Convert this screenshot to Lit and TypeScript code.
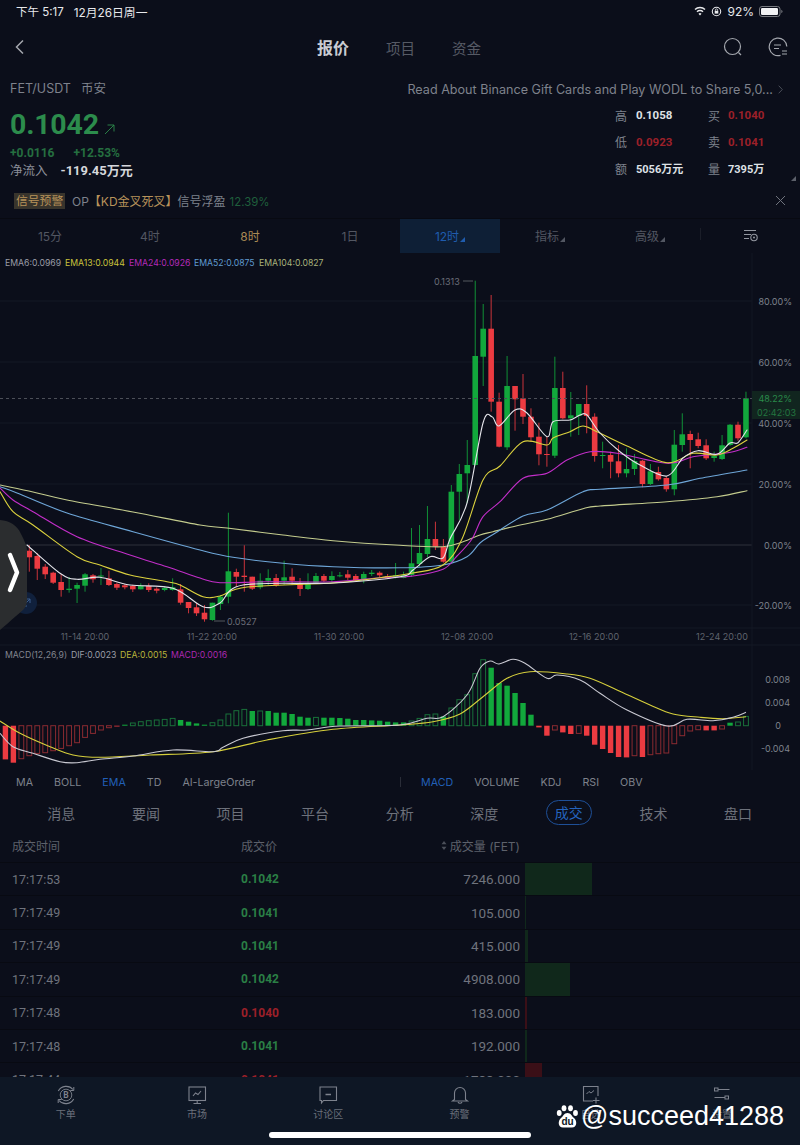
import { LitElement, html, css, svg } from "lit";
import { customElement } from "lit/decorators.js";

type C = [number, number, number, number, "r" | "g"];
const CANDLES: C[] = [
  [545,550.7,557.3,571.7,"r"],[553,556,568.7,580,"r"],[564,566.7,574.3,579,"r"],[571.7,572.7,582.7,584,"r"],[574,582,590,596.7,"r"],
  [577,588.7,590,592.7,"g"],[582.7,585,588.7,603,"g"],[573,574.3,585.7,591.7,"g"],[574,575.3,579.3,582.7,"r"],[568,575.5,576.5,585,"g"],
  [570.7,578.3,585,586,"r"],[582.7,584,587.7,590,"r"],[584,585.3,587.3,589.3,"r"],[584.7,586,589.3,592,"r"],[583.3,585.7,589.3,589.5,"g"],
  [583.3,586,590,592,"r"],[587.3,588.7,590.7,593.3,"r"],[586,588,590,591.3,"g"],[578.3,587.3,590,590.7,"g"],[584,589.3,602.7,604.7,"r"],
  [602,602,608,613.3,"r"],[603,607.3,613.3,616,"r"],[605,612.7,619.3,621.7,"r"],[602.7,602.7,620,620.7,"g"],[595,596.7,604,610,"g"],
  [512.7,571.3,596.7,603.3,"g"],[568.7,572,576.7,586.7,"r"],[545.3,575.7,577,591.7,"r"],[576.7,576.7,588.7,590,"r"],[573.3,580.7,587.3,589.3,"g"],
  [569.3,578,580.7,585,"g"],[574,578,585.3,586.7,"r"],[560.7,577.3,580.7,585,"g"],[568.3,576.7,580.7,585,"r"],[578,583.3,589,596,"r"],
  [573.3,583.3,589,590,"g"],[573,576,582.7,584,"g"],[574,576,580.7,582,"r"],[571.3,576,580,582,"g"],[572,575.3,576.3,577.3,"g"],
  [570,574.3,577.7,580,"r"],[574,576,580,581.7,"r"],[571.7,574,579.3,583.3,"g"],[570,572.7,574,576,"g"],[571.3,572.7,575.3,577.3,"r"],
  [574,576,578.3,579,"r"],[563,575.3,578,578.5,"g"],[571.7,575,578,578.3,"g"],[528,563.3,575,576.7,"g"],[525,553,564,566.7,"g"],
  [506,539,554,557.3,"g"],[521.7,539,546.7,550,"r"],[539,546.7,561.7,562.7,"r"],[485,491.7,561.7,563.3,"g"],[464,474,491.7,520,"g"],
  [440,465,473.3,503,"g"],[280.7,356,465,465.5,"g"],[304,328.7,356.7,386,"g"],[295,328.7,401.7,411.7,"r"],[392.7,401.7,446.7,447.3,"r"],
  [356,386,447.3,450,"g"],[386,386,399.3,430.7,"r"],[374,398.3,416.7,424,"r"],[408.3,416.7,437.3,441.7,"r"],[422.7,436.7,454.3,465.3,"r"],
  [436,454,455,466.7,"r"],[356.7,388,455.7,458,"g"],[371.7,388,418.3,419.3,"r"],[392,415.3,418.3,436.7,"g"],[404,404,416,435,"g"],
  [385.3,404,416,433.3,"r"],[413.3,416.7,456,461.7,"r"],[441.7,455,456,468.3,"g"],[451.7,455,461.7,478.3,"r"],[445,461.3,473.3,477.3,"r"],
  [448.3,469,473.3,477.3,"g"],[454,461,469,475,"g"],[460,460.7,484,487.3,"r"],[464,471.3,484,485,"g"],[466.7,472,479.3,480.7,"r"],
  [476,478,489.3,491.7,"r"],[430,444.7,489.3,495.3,"g"],[413.3,434.3,445,451.7,"g"],[430.7,434,440,468.3,"r"],[432.7,439.3,446,448.3,"r"],
  [439.3,445.3,458.3,460,"r"],[451.7,456,458,461.7,"g"],[435,445.3,459,460,"g"],[424,424.7,445,446,"g"],[421.7,424.7,438.3,440.7,"r"],
  [391.7,398.3,437.3,438.3,"g"],
];

type P = [number, number][];
const EMA104: P = [[0,485],[33,492],[67,500],[133,512],[200,525],[227,528],[283,535],[333,540.7],[400,545.3],[443,546.7],[463,541.7],[480,535],[493,531.7],[513,526.7],[547,519.3],[583,508.7],[600,506],[667,501.7],[717,496.7],[747,490.7]];
const EMA52: P = [[0,486.7],[17,493],[67,513],[133,531.7],[200,550],[233,557.3],[283,563.3],[333,566.7],[400,567.8],[443,565],[467,556.7],[480,543],[493,534.5],[523,516],[547,510],[583,491.7],[600,489.3],[667,485],[700,478.3],[747,470]];
const EMA24: P = [[0,488],[13,500],[33,511.7],[77,536.7],[130,555],[167,566.7],[200,578],[220,582.7],[267,581.7],[333,581.7],[380,577.7],[413,576],[443,569.3],[457,556],[472,539],[483,516.7],[500,501.7],[523,478.3],[547,473.3],[567,460],[590,451.7],[617,453.3],[667,463.3],[693,456.7],[717,454],[733,451.7],[747,447.3]];
const EMA13: P = [[0,491.7],[13,511.7],[33,525],[77,556.7],[100,565],[130,575],[167,581.7],[180,585],[203,596.7],[220,596],[247,587],[333,583],[380,577.7],[413,573],[443,565],[462,539],[483,480],[500,466],[523,441.7],[547,445],[553,438],[570,431.7],[583,426],[597,431.7],[627,446],[667,462.7],[693,453.3],[717,455],[733,448.3],[747,440]];
const EMA6: P = [[27,545],[60,573.3],[77,579.3],[100,577.3],[130,585],[173,588.3],[203,606.7],[220,603],[243,585],[333,583],[400,576.7],[413,570],[430,556.7],[443,558],[450,539],[467,503],[483,423],[492,416.7],[499,426],[515,410],[527,413],[547,436.7],[553,421.7],[570,420],[580,415],[587,415],[600,433],[620,451.7],[640,465],[667,476],[683,458],[698,450.7],[717,454.3],[730,443],[738,442.7],[747,430]];
const DIF: P = [[0,733.3],[13,746.7],[33,753.3],[60,761.7],[77,762.7],[100,759.3],[133,756],[173,750],[213,751.7],[223,747.3],[243,738.3],[283,730.7],[307,730],[340,726],[400,725],[427,718.3],[443,716.7],[467,695],[480,668.3],[490,661],[499,664],[513,659.3],[525,663.3],[547,678.3],[557,675],[580,680],[600,693.3],[627,710],[667,726],[687,719.3],[713,720.7],[733,717.3],[746,712.3]];
const DEA: P = [[0,721],[20,733.3],[50,746.7],[73,755],[100,757.3],[150,755],[213,751.7],[267,740],[333,729.3],[400,725],[433,721.7],[460,714],[483,696.7],[507,678.3],[530,671.7],[567,674],[590,678.3],[617,690],[650,705],[673,714],[700,717.3],[723,718.7],[746,716.7]];

// signed height (up is positive) and filled flag, first entry sits at i = -3
const MACD: [number, number][] = [
  [-33.7,1],[-37,1],[-33,0],[-30,0],[-27.7,0],[-27,0],[-25,0],[-22.7,0],[-20,0],[-17,0],[-11.7,0],[-7.7,0],[-4.3,0],[-2,0],[-0.8,1],
  [1,1],[2.7,0],[4,0],[5,0],[5.7,0],[6.3,0],[7.3,0],[5.7,1],[4,1],[2.3,1],[1,1],[3,0],[5.7,0],[11.7,0],[15,0],[16.3,0],
  [14.7,1],[14.7,0],[14.7,1],[13,1],[13,1],[11.7,1],[9,1],[8,1],[8.3,0],[8,1],[8,1],[7.7,1],[7,1],[5.7,1],[5.7,1],[5.3,1],[5,1],[4,1],[3.3,1],
  [3.3,1],[4.7,0],[7.3,0],[11,0],[11.7,0],[9.3,1],[17.7,0],[26,0],[31,0],[52,0],[66,0],[58,1],[42.7,1],[40,1],[32.7,1],[22.7,1],[11,1],
  [-1.7,1],[-10,1],[-4.3,0],[-6.7,1],[-8.3,1],[-7.7,0],[-10,1],[-19,1],[-23.3,1],[-27.3,1],[-31.3,1],[-31.7,1],[-30,0],[-31.3,1],[-29,0],[-28,0],[-27.3,0],[-18,0],[-10,0],[-5.3,0],[-4,0],[-4.7,1],[-4.7,1],[-3.3,0],
  [3,1],[3.7,0],[9.3,0],
];

const cx = (i: number) => 29.3 + 7.963 * i;
const GREEN = "#12a83c";
const RED = "#ec3b41";
const ZERO = 725.7;

// Catmull-Rom through the sampled points, so the moving averages read as curves
const smooth = (p: P) => {
  let d = `M${p[0][0]} ${p[0][1]}`;
  for (let i = 0; i < p.length - 1; i++) {
    const a = p[Math.max(0, i - 1)];
    const b = p[i];
    const c = p[i + 1];
    const e = p[Math.min(p.length - 1, i + 2)];
    const c1x = b[0] + (c[0] - a[0]) / 6;
    const c1y = b[1] + (c[1] - a[1]) / 6;
    const c2x = c[0] - (e[0] - b[0]) / 6;
    const c2y = c[1] - (e[1] - b[1]) / 6;
    d += `C${c1x.toFixed(1)} ${c1y.toFixed(1)} ${c2x.toFixed(1)} ${c2y.toFixed(1)} ${c[0]} ${c[1]}`;
  }
  return d;
};

const TRADES: [string, string, string, string, number][] = [
  ["17:17:53", "0.1042", "g", "7246.000", 67],
  ["17:17:49", "0.1041", "g", "105.000", 1],
  ["17:17:49", "0.1041", "g", "415.000", 3],
  ["17:17:49", "0.1042", "g", "4908.000", 45],
  ["17:17:48", "0.1040", "r", "183.000", 2],
  ["17:17:48", "0.1041", "g", "192.000", 2],
  ["17:17:44", "0.1041", "r", "1788.000", 17],
];

@customElement("app-root")
export class AppRoot extends LitElement {
  static styles = css`
    :host {
      display: block;
      font-family: Inter, "Noto Sans CJK SC", sans-serif;
    }
    .page {
      position: relative;
      width: 800px;
      height: 1145px;
      overflow: hidden;
      background: #0b0e1a;
      color: #8b8f99;
    }
    .status {
      height: 24px;
      padding: 0 17px 2px 16px;
      box-sizing: border-box;
      display: flex;
      align-items: center;
      justify-content: space-between;
      color: #e8e9ec;
      font-size: 11.5px;
    }
    .status .left { display: flex; gap: 10px; }
    .status .date { font-size: 11.8px; }
    .status .right { display: flex; align-items: center; gap: 5px; font-size: 12px; }
    .nav {
      height: 46px;
      padding: 0 12px 0 10px;
      display: grid;
      grid-template-columns: 1fr auto 1fr;
      align-items: center;
    }
    .nav .back { margin-left: 3px; }
    .nav .tabs { display: flex; gap: 37px; align-items: center; font-size: 14.5px; color: #565a65; }
    .nav .tabs b { font-size: 16px; color: #c9ccd3; font-weight: 700; }
    .nav .icons { display: flex; justify-content: flex-end; gap: 25px; align-items: center; }
    .quote { position: relative; padding: 10px 0 8px 10px; }
    .newsrow { display: flex; justify-content: space-between; align-items: center; height: 18px; font-size: 12.6px; color: #7e828c; padding-right: 17px; }
    .pair { display: flex; gap: 10px; font-size: 12.5px; line-height: 18px; align-items: baseline; }
    .news { display: flex; align-items: center; gap: 5px; }
    .qbody { display: flex; justify-content: space-between; }
    .qleft { padding-top: 8px; }
    .bigrow { display: flex; align-items: center; gap: 5px; height: 36px; }
    .big { font-family: Roboto, sans-serif; font-weight: 700; font-size: 28.5px; color: #2c8c4c; letter-spacing: -0.2px; }
    .upar { margin-top: 10px; }
    .changes { display: flex; gap: 19px; margin-top: 3px; height: 16px; line-height: 16px; font-family: Roboto, sans-serif; font-weight: 700; font-size: 12px; color: #256f40; }
    .flow { display: flex; gap: 13px; margin-top: 2px; height: 16px; line-height: 16px; font-size: 12.5px; align-items: center; }
    .flow b { font-family: Roboto, "Noto Sans CJK SC", sans-serif; color: #d5d7dc; font-weight: 700; font-size: 13px; }
    .stats {
      margin-top: 4px;
      width: 185px;
      display: grid;
      grid-template-columns: 21px 72px 20px 1fr;
      grid-auto-rows: 26.5px;
      align-items: center;
      font-size: 12px;
      color: #7e828c;
    }
    .stats b { font-family: Roboto, "Noto Sans CJK SC", sans-serif; font-size: 11.5px; font-weight: 700; color: #dfe1e6; }
    .stats b.red { color: #9c2029; }
    .stats b.cjk { font-size: 11px; }
    .corner { position: absolute; right: 4px; bottom: 9px; }
    .alert {
      height: 28.5px;
      padding: 0 14px 6px;
      box-sizing: border-box;
      display: flex;
      align-items: center;
      gap: 7px;
      font-size: 12px;
      color: #7e828c;
    }
    .badge { background: #38342c; color: #b8935a; padding: 0 2px; height: 16px; line-height: 16px; width: 51px; box-sizing: border-box; text-align: center; font-size: 11.8px; white-space: nowrap; }
    .alert .gold { color: #b8935a; }
    .alert .gain { color: #1f5f3c; margin-left: 4px; font-size: 11.4px; }
    .alert .grow { flex: 1; }
    .periods {
      height: 34px;
      border-top: 1px solid #080a12;
      display: grid;
      grid-template-columns: repeat(8, 100px);
      align-items: stretch;
      font-size: 12px;
      color: #535762;
      position: relative;
    }
    .periods > div { display: flex; align-items: center; justify-content: center; gap: 1px; padding-bottom: 2px; box-sizing: border-box; }
    .periods .gold { color: #a98a55; }
    .periods .on { background: #0e1f36; color: #1f5cae; }
    .periods .tri { margin-top: 8px; }
    .periods .rule { position: absolute; left: 700px; top: 9px; height: 12px; width: 1px; background: #1b1e29; }
    .chart { display: block; width: 800px; height: 517px; }
    .chartwrap { position: relative; height: 517px; }
    .handle { position: absolute; left: 0; top: 267px; }
    .legend { font-size: 8.7px; font-family: Inter, sans-serif; }
    .axis { font-size: 9px; font-family: Inter, sans-serif; fill: #7e828c; }
    .dim { fill: #6b6f79; }
    .time { fill: #5f636d; }
    .gtag { fill: #2a8a4a; }
    .gclock { fill: #23763f; }
    .indicators { height: 26px; padding-bottom: 2px; box-sizing: border-box; display: flex; align-items: center; font-size: 10.7px; color: #7e828c; }
    .indicators > div { display: flex; gap: 21px; align-items: center; }
    .indicators .g1 { width: 384px; padding-left: 16px; }
    .indicators .g2 { padding-left: 20px; border-left: 1px solid #2a2d38; height: 10px; }
    .on-blue { color: #2260b8; }
    .subtabs { height: 33px; display: grid; grid-template-columns: repeat(9, 84.6px); padding-left: 19px; align-items: center; justify-items: center; font-size: 14px; color: #6d717b; }
    .subtabs .on { color: #2463bd; border: 1px solid #1e4f97; border-radius: 13px; height: 25px; line-height: 24px; width: 46px; text-align: center; box-sizing: border-box; }
    .thead, .row {
      display: grid;
      grid-template-columns: 229px 120px 159px 1fr;
      padding-left: 12px;
      align-items: center;
    }
    .thead { height: 33px; font-size: 12px; color: #5d616b; }
    .thead .vol { justify-self: end; display: flex; align-items: center; gap: 3px; }
    .rows { height: 215px; overflow: hidden; }
    .row { height: 33.4px; box-sizing: border-box; border-top: 1px solid #080a12; font-size: 12.5px; color: #6f737d; font-family: Roboto, sans-serif; }
    .row .price { font-weight: 700; font-size: 12px; }
    .row .g { color: #2a7f45; }
    .row .r { color: #9c2029; }
    .row .qty { justify-self: end; font-size: 13.5px; }
    .row .barcell { height: 100%; margin-left: 5px; }
    .row .bar { height: 100%; }
    .row .bar.g { background: #10281b; }
    .row .bar.r { background: #3a0f17; }
    .bottom {
      height: 68px;
      background: #0e1725;
      display: grid;
      grid-template-columns: repeat(6, 131.3px);
      font-size: 10px;
      color: #6b707b;
    }
    .bottom > div { display: flex; flex-direction: column; align-items: center; padding-top: 8px; gap: 2px; }
    .bottom span { line-height: 14px; }
    .home { position: absolute; left: 269px; top: 1132px; width: 262px; height: 6px; border-radius: 3px; background: #fff; }
    .mark {
      position: absolute;
      left: 556px;
      top: 1100px;
      display: flex;
      align-items: center;
      gap: 2px;
      color: #fff;
      font-family: "Liberation Sans", sans-serif;
      font-size: 27px;
      line-height: 32px;
    }
  `;

  private chart() {
    const gl = [301, 362, 423, 484, 605];
    const axis: [string, number][] = [["80.00%", 301], ["60.00%", 362], ["40.00%", 423], ["20.00%", 484], ["0.00%", 545], ["-20.00%", 605]];
    const times: [string, number][] = [["11-14 20:00", 85], ["11-22 20:00", 212], ["11-30 20:00", 339], ["12-08 20:00", 467], ["12-16 20:00", 594], ["12-24 20:00", 722]];
    const maxis: [string, number][] = [["0.008", 679], ["0.004", 702], ["0", 725], ["-0.004", 748]];
    const lines: [P, string][] = [
      [EMA104, "#c4cc8e"],
      [EMA52, "#6ea6d8"],
      [EMA24, "#c22ec8"],
      [EMA13, "#dcd23e"],
      [EMA6, "#e4e4ea"],
    ];
    return svg`
      <svg class="chart" viewBox="0 253 800 517" xmlns="http://www.w3.org/2000/svg">
        <text class="legend" y="266"><tspan x="5" fill="#9a9ca6">EMA6:0.0969</tspan><tspan x="65" fill="#c9c23c">EMA13:0.0944</tspan><tspan x="129" fill="#b42ab8">EMA24:0.0926</tspan><tspan x="194" fill="#5f9ad0">EMA52:0.0875</tspan><tspan x="259" fill="#a9b27c">EMA104:0.0827</tspan></text>
        ${gl.map((y) => svg`<line x1="0" x2="752" y1=${y} y2=${y} stroke="#141824" />`)}
        <line x1="0" x2="752" y1="545" y2="545" stroke="#2e313a" />
        <line x1="752" x2="752" y1="253" y2="770" stroke="#131722" />
        <line x1="0" x2="800" y1="628" y2="628" stroke="#141824" />
        <line x1="0" x2="800" y1="645" y2="645" stroke="#141824" />
        ${CANDLES.map((c, i) => {
          const col = c[4] === "g" ? GREEN : RED;
          const x = cx(i);
          return svg`<line x1=${x} x2=${x} y1=${c[0]} y2=${c[3]} stroke=${col} stroke-width="1" opacity="0.85" />
            <rect x=${x - 2.8} width="5.6" y=${c[1]} height=${Math.max(1, c[2] - c[1])} fill=${col} />`;
        })}
        ${lines.map(([p, col]) => svg`<path d=${smooth(p)} fill="none" stroke=${col} stroke-width="1.1" stroke-linejoin="round" stroke-linecap="round" />`)}
        <line x1="0" x2="752" y1="398.5" y2="398.5" stroke="#4c4f58" stroke-dasharray="3 3" />
        <rect x="752" y="391" width="48" height="14" fill="#11251f" />
        <rect x="752" y="405" width="48" height="14" fill="#11251f" />
        <text class="axis gtag" x="792" y="402" text-anchor="end">48.22%</text>
        <text class="axis gclock" x="796" y="416" text-anchor="end">02:42:03</text>
        ${axis.map(([t, y]) => svg`<text class="axis" x="792" y=${y + 4} text-anchor="end">${t}</text>`)}
        <text class="axis dim" x="434" y="284.500">0.1313</text>
        <line x1="463" x2="473" y1="281" y2="281" stroke="#55585f" />
        <text class="axis dim" x="227" y="624.500">0.0527</text>
        <line x1="214" x2="225" y1="621" y2="621" stroke="#55585f" />
        ${times.map(([t, x]) => svg`<text class="axis time" x=${x} y="640" text-anchor="middle">${t}</text>`)}
        <text class="legend" y="658"><tspan x="5" fill="#82858f">MACD(12,26,9)</tspan><tspan x="71" fill="#9a9ca6">DIF:0.0023</tspan><tspan x="120" fill="#b9b33a">DEA:0.0015</tspan><tspan x="171" fill="#ac28b0">MACD:0.0016</tspan></text>
        ${MACD.map(([h, filled], k) => {
          const x = cx(k - 3);
          const up = h > 0;
          const y = up ? ZERO - h : ZERO;
          const hh = Math.abs(h);
          if (filled) {
            return svg`<rect x=${x - 2.7} width="5.4" y=${y} height=${hh} fill=${up ? GREEN : RED} />`;
          }
          return svg`<rect x=${x - 2.4} width="4.8" y=${y} height=${hh} fill="none" stroke=${up ? "#19713a" : "#8a2b31"} />`;
        })}
        <path d=${smooth(DEA)} fill="none" stroke="#d6cf3c" stroke-width="1.1" />
        <path d=${smooth(DIF)} fill="none" stroke="#c9c9d2" stroke-width="1.1" />
        ${maxis.map(([t, y]) => svg`<text class="axis" x=${t === "0" ? 781 : 790} y=${y + 4} text-anchor="end">${t}</text>`)}
        <circle cx="26" cy="603" r="11" fill="#10203c" />
        <path d="M23 606l7-7m-4 0h4v4M23 602v4h4" fill="none" stroke="#3a5c8c" stroke-width="1" />
      </svg>`;
  }

  render() {
    const tri = html`<svg class="tri" width="5" height="5" viewBox="0 0 5 5"><path d="M5 0V5H0Z" fill="currentColor" /></svg>`;
    const I = "#7d828d";
    return html`
      <div class="page">
        <div class="status">
          <div class="left"><span>下午 5:17</span><span class="date">12月26日周一</span></div>
          <div class="right">
            <svg width="12" height="10" viewBox="0 0 12 10"><path d="M1 3.600a7 7 0 0 1 10 0M3 5.800a4.200 4.200 0 0 1 6 0" fill="none" stroke="#e8e9ec" stroke-width="1.400" /><path d="M6 9.400L4.500 7.700a2.200 2.200 0 0 1 3 0Z" fill="#e8e9ec" /></svg>
            <svg width="11" height="11" viewBox="0 0 11 11"><circle cx="5.500" cy="5.500" r="4.200" fill="none" stroke="#e8e9ec" stroke-width="1.100" /><rect x="3.700" y="4.800" width="3.600" height="2.800" fill="#e8e9ec" /><path d="M4.400 4.800V4a1.100 1.100 0 0 1 2.200 0v.8" fill="none" stroke="#e8e9ec" stroke-width=".8" /></svg>
            <span>92%</span>
            <svg width="24" height="11" viewBox="0 0 24 11"><rect x=".5" y=".5" width="20.500" height="10" rx="2.500" fill="none" stroke="#77797f" /><rect x="2" y="2" width="17" height="7" rx="1.200" fill="#f2f2f4" /><path d="M22.300 3.800a1.800 1.800 0 0 1 0 3.400Z" fill="#77797f" /></svg>
          </div>
        </div>

        <div class="nav">
          <svg class="back" width="12" height="16" viewBox="0 0 12 16"><path d="M10 1.500L3.500 8l6.500 6.500" fill="none" stroke="#a4a7ae" stroke-width="1.500" /></svg>
          <div class="tabs"><b>报价</b><span>项目</span><span>资金</span></div>
          <div class="icons">
            <svg width="20" height="20" viewBox="0 0 20 20"><circle cx="9.500" cy="9.500" r="8" fill="none" stroke="#a4a7ae" stroke-width="1.200" /><path d="M15.500 15.500L18 18" stroke="#a4a7ae" stroke-width="1.200" /></svg>
            <svg width="20" height="20" viewBox="0 0 20 20"><path d="M12.500 18.300A8.800 8.800 0 1 1 18.800 9.500" fill="none" stroke="#a4a7ae" stroke-width="1.200" /><path d="M6 8h7M6 11.500h5M14 14h5M14 17h5" stroke="#a4a7ae" stroke-width="1.200" /></svg>
          </div>
        </div>

        <div class="quote">
          <div class="newsrow">
            <div class="pair"><span>FET/USDT</span><span>币安</span></div>
            <div class="news"><span>Read About Binance Gift Cards and Play WODL to Share 5,0...</span>
              <svg width="5" height="9" viewBox="0 0 5 9"><path d="M.7.7L4.300 4.500.7 8.300" fill="none" stroke="#4b4f59" /></svg></div>
          </div>
          <div class="qbody">
            <div class="qleft">
              <div class="bigrow"><span class="big">0.1042</span>
                <svg class="upar" width="11" height="11" viewBox="0 0 11 11"><path d="M1 10L10 1M3.500 1H10V7.500" fill="none" stroke="#2c8c4c" stroke-width=".9" /></svg></div>
              <div class="changes"><span>+0.0116</span><span>+12.53%</span></div>
              <div class="flow"><span>净流入</span><b>-119.45万元</b></div>
            </div>
            <div class="stats">
              <span>高</span><b>0.1058</b><span>买</span><b class="red">0.1040</b>
              <span>低</span><b class="red">0.0923</b><span>卖</span><b class="red">0.1041</b>
              <span>额</span><b class="cjk">5056万元</b><span>量</span><b class="cjk">7395万</b>
            </div>
          </div>
          <svg class="corner" width="5" height="5" viewBox="0 0 5 5"><path d="M5 0V5H0Z" fill="#5c606a" /></svg>
        </div>

        <div class="alert">
          <span class="badge">信号预警</span>
          <span>OP<span class="gold">【KD金叉死叉】</span>信号浮盈<span class="gain">12.39%</span></span>
          <span class="grow"></span>
          <svg width="11" height="11" viewBox="0 0 11 11"><path d="M1 1l9 9M10 1l-9 9" stroke="#6f737d" stroke-width="1" /></svg>
        </div>

        <div class="periods">
          <div>15分</div><div>4时</div><div class="gold">8时</div><div>1日</div>
          <div class="on">12时${tri}</div><div>指标${tri}</div><div>高级${tri}</div>
          <div>
            <svg width="15" height="13" viewBox="0 0 15 13"><path d="M1 1.500h12M1 5.500h7M1 9.500h5" stroke="#9397a0" stroke-width="1.200" /><circle cx="11" cy="8.500" r="3.200" fill="none" stroke="#9397a0" stroke-width="1.100" /><circle cx="11" cy="8.500" r="1" fill="#9397a0" /></svg>
          </div>
          <span class="rule"></span>
        </div>

        <div class="chartwrap">
          ${this.chart()}
          <svg class="handle" width="30" height="112" viewBox="0 0 30 112">
            <path d="M0 0C10 1 17 5 21 14C25 22 27 26 27 32V80C27 88 22 91 16 96C10 101 5 106 0 110Z" fill="#2b2d2f" />
            <path d="M10 35L17 52.500L10 70" fill="none" stroke="#fff" stroke-width="4.500" stroke-linecap="round" stroke-linejoin="round" />
          </svg>
        </div>

        <div class="indicators">
          <div class="g1"><span>MA</span><span>BOLL</span><span class="on-blue">EMA</span><span>TD</span><span>AI-LargeOrder</span></div>
          <div class="g2"><span class="on-blue">MACD</span><span>VOLUME</span><span>KDJ</span><span>RSI</span><span>OBV</span></div>
        </div>

        <div class="subtabs">
          <span>消息</span><span>要闻</span><span>项目</span><span>平台</span><span>分析</span><span>深度</span><span class="on">成交</span><span>技术</span><span>盘口</span>
        </div>

        <div class="thead">
          <span>成交时间</span><span>成交价</span>
          <span class="vol"><svg width="6" height="9" viewBox="0 0 6 9"><path d="M3 0l2.500 3.300h-5ZM3 9L.5 5.700h5Z" fill="#4b4f59" /></svg>成交量 (FET)</span>
          <span></span>
        </div>

        <div class="rows">
          ${TRADES.map(
            ([t, p, c, q, w]) => html`<div class="row">
              <span>${t}</span>
              <span class="price ${c}">${p}</span>
              <span class="qty">${q}</span>
              <div class="barcell"><div class="bar ${c}" style="width:${w}px"></div></div>
            </div>`
          )}
        </div>

        <div class="bottom">
          <div>
            <svg width="20" height="20" viewBox="0 0 20 20"><path d="M2.300 6A9 9 0 0 1 17 4.500M17.700 14A9 9 0 0 1 3 15.500" fill="none" stroke=${I} stroke-width="1.100" /><path d="M17.800 2v3.500h-3.500M2.200 18v-3.500h3.500" fill="none" stroke=${I} stroke-width="1" /><circle cx="10" cy="10" r="5.800" fill="none" stroke=${I} stroke-width=".9" /><text x="10" y="13" text-anchor="middle" font-size="8.500" font-weight="700" fill=${I} font-family="Roboto, sans-serif">B</text></svg>
            <span>下单</span>
          </div>
          <div>
            <svg width="20" height="20" viewBox="0 0 20 20"><rect x="2" y="2" width="16.500" height="13.500" fill="none" stroke=${I} stroke-width="1.100" /><path d="M6 11l2.500-3 2.500 1.500L14 6" fill="none" stroke=${I} stroke-width="1.100" /><path d="M10.200 15.500v2.500M6.500 18.500h7.500" stroke=${I} stroke-width="1.100" /></svg>
            <span>市场</span>
          </div>
          <div>
            <svg width="20" height="20" viewBox="0 0 20 20"><path d="M2 2h16.500v13.500H5.500L3.500 18v-2.500H2Z" fill="none" stroke=${I} stroke-width="1.100" /><path d="M7.500 9.500h5.500" stroke=${I} stroke-width="1.500" /></svg>
            <span>讨论区</span>
          </div>
          <div>
            <svg width="20" height="20" viewBox="0 0 20 20"><path d="M4.500 14.500V8a5.500 5.500 0 0 1 11 0v6.500l2 1.500H2.500Z" fill="none" stroke=${I} stroke-width="1.100" /><path d="M8 17a2.200 2.200 0 0 0 4 0" fill="none" stroke=${I} stroke-width="1.100" /></svg>
            <span>预警</span>
          </div>
          <div>
            <svg width="20" height="20" viewBox="0 0 20 20"><path d="M12 16H2.500V1.500H17V11" fill="none" stroke=${I} stroke-width="1.100" /><path d="M5.500 9l2.500-2.500 2 1.500 3-2.500" fill="none" stroke=${I} stroke-width="1" /><path d="M15 12.500v6M12 15.500h6.500" stroke=${I} stroke-width="1.100" /></svg>
            <span>自选</span>
          </div>
          <div>
            <svg width="20" height="20" viewBox="0 0 20 20"><rect x="2.500" y="3" width="3.500" height="3" fill="none" stroke=${I} /><path d="M6 4.500h11.500M2.500 12.500H13" stroke=${I} /><rect x="13" y="11" width="3.500" height="3" fill="none" stroke=${I} /></svg>
            <span>设置</span>
          </div>
        </div>

        <div class="home"></div>
        <div class="mark">
          <svg width="23" height="23" viewBox="0 0 23 23">
            <ellipse cx="3.200" cy="8" rx="2.400" ry="3" fill="#fff" />
            <ellipse cx="8" cy="3.200" rx="2.400" ry="3" fill="#fff" />
            <ellipse cx="14.500" cy="3.200" rx="2.400" ry="3" fill="#fff" />
            <ellipse cx="19.500" cy="8" rx="2.400" ry="3" fill="#fff" />
            <path d="M11.500 8C8 8 7.500 11 5 13C1.500 16 2 22.500 7 22.500H16C21 22.500 21.500 16 18 13C15.500 11 15 8 11.500 8Z" fill="#fff" />
            <text x="11.500" y="20" text-anchor="middle" font-size="10" font-weight="700" fill="#0e1725" font-family="Liberation Sans, sans-serif">du</text>
          </svg>
          <span>@succeed41288</span>
        </div>
      </div>
    `;
  }
}
